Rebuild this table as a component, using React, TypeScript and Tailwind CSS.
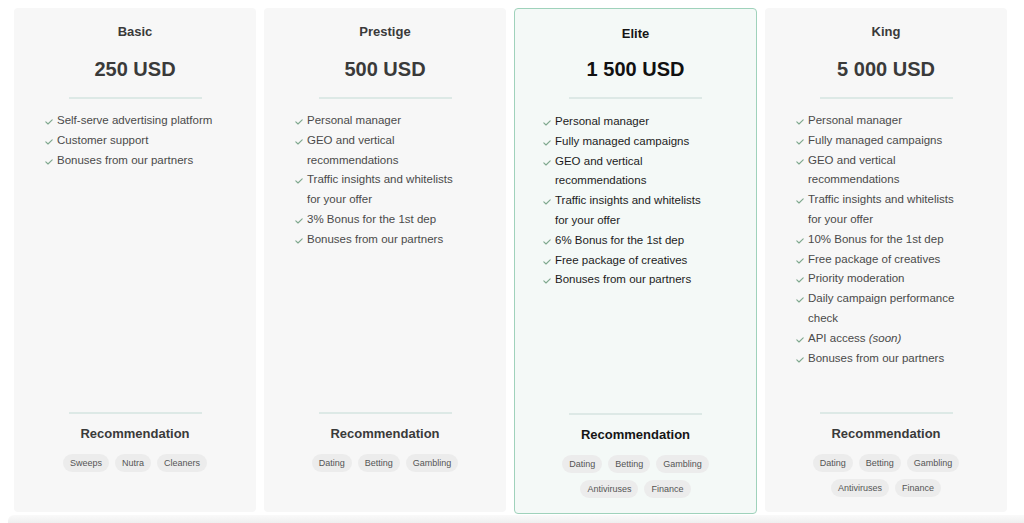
import React from "react";

type Plan = {
  name: string;
  price: string;
  features: React.ReactNode[];
  tags: string[];
  featured?: boolean;
};

const plans: Plan[] = [
  {
    name: "Basic",
    price: "250 USD",
    features: ["Self-serve advertising platform", "Customer support", "Bonuses from our partners"],
    tags: ["Sweeps", "Nutra", "Cleaners"],
  },
  {
    name: "Prestige",
    price: "500 USD",
    features: [
      "Personal manager",
      "GEO and vertical recommendations",
      "Traffic insights and whitelists for your offer",
      "3% Bonus for the 1st dep",
      "Bonuses from our partners",
    ],
    tags: ["Dating", "Betting", "Gambling"],
  },
  {
    name: "Elite",
    price: "1 500 USD",
    featured: true,
    features: [
      "Personal manager",
      "Fully managed campaigns",
      "GEO and vertical recommendations",
      "Traffic insights and whitelists for your offer",
      "6% Bonus for the 1st dep",
      "Free package of creatives",
      "Bonuses from our partners",
    ],
    tags: ["Dating", "Betting", "Gambling", "Antiviruses", "Finance"],
  },
  {
    name: "King",
    price: "5 000 USD",
    features: [
      "Personal manager",
      "Fully managed campaigns",
      "GEO and vertical recommendations",
      "Traffic insights and whitelists for your offer",
      "10% Bonus for the 1st dep",
      "Free package of creatives",
      "Priority moderation",
      "Daily campaign performance check",
      <>
        API access <em>(soon)</em>
      </>,
      "Bonuses from our partners",
    ],
    tags: ["Dating", "Betting", "Gambling", "Antiviruses", "Finance"],
  },
];

const Check = () => (
  <svg width="8" height="6" viewBox="0 0 8 6" fill="none" className="mt-[8px] shrink-0">
    <path d="M0.8 2.8 L3 5 L7.2 0.8" stroke="#7fa88e" strokeWidth="1.1" strokeLinecap="round" strokeLinejoin="round" />
  </svg>
);

const PlanCard = ({ plan }: { plan: Plan }) => {
  const f = plan.featured;
  return (
    <div
      className={
        f
          ? "w-[243px] h-[506px] flex flex-col rounded-[4px] border border-[#9fd2bb] bg-[#f4f9f7] pt-[17px]"
          : "w-[242px] h-[504px] flex flex-col rounded-[4px] bg-[#f7f7f7] pt-[16px]"
      }
    >
      {/* Header */}
      <h3 className={`text-center text-[13px] leading-[16px] font-bold ${f ? "text-[#151515]" : "text-[#3a3a3a]"}`}>
        {plan.name}
      </h3>
      <p
        className={`${f ? "mt-[15px] text-[#111]" : "mt-[17px] text-[#3a3a3a]"} text-center text-[20px] leading-[24px] font-bold`}
      >
        {plan.price}
      </p>
      <div className="mx-auto mt-[16px] h-[2px] w-[133px] bg-[#dde9e6]"></div>

      {/* Features */}
      <ul className={`${f ? "mt-[13px] pl-[28px]" : "mt-[12px] pl-[31px]"}`}>
        {plan.features.map((item, i) => (
          <li key={i} className="flex gap-[4px]">
            <Check />
            <span className={`w-[159px] text-[11.5px] leading-[19.8px] ${f ? "text-[#1c1c1c]" : "text-[#4a4a4a]"}`}>
              {item}
            </span>
          </li>
        ))}
      </ul>

      {/* Recommendation */}
      <div className="mt-auto h-[100px] flex flex-col items-center">
        <div className="h-[2px] w-[133px] bg-[#dde9e6]"></div>
        <h4 className={`mt-[12px] text-[13px] leading-[16px] font-bold ${f ? "text-[#151515]" : "text-[#3a3a3a]"}`}>
          Recommendation
        </h4>
        <div className="mt-[12px] w-[170px] flex flex-wrap justify-center gap-x-[6px] gap-y-[7px]">
          {plan.tags.map((t) => (
            <span
              key={t}
              className="h-[18px] px-[7px] rounded-full bg-[#ececec] text-[9px] leading-[18px] text-[#555]"
            >
              {t}
            </span>
          ))}
        </div>
      </div>
    </div>
  );
};

export default function App() {
  return (
    <div
      className="w-[1024px] h-[523px] bg-white flex flex-col overflow-hidden"
      style={{ fontFamily: '"Liberation Sans", Arial, sans-serif' }}
    >
      <div className="flex items-start gap-[8px] pl-[14px] pt-[8px]">
        {plans.map((p) => (
          <PlanCard key={p.name} plan={p} />
        ))}
      </div>
      <div className="mt-auto ml-[8px] h-[8px] rounded-tl-[6px] bg-gradient-to-b from-[#fafafa] to-[#efefef]"></div>
    </div>
  );
}
